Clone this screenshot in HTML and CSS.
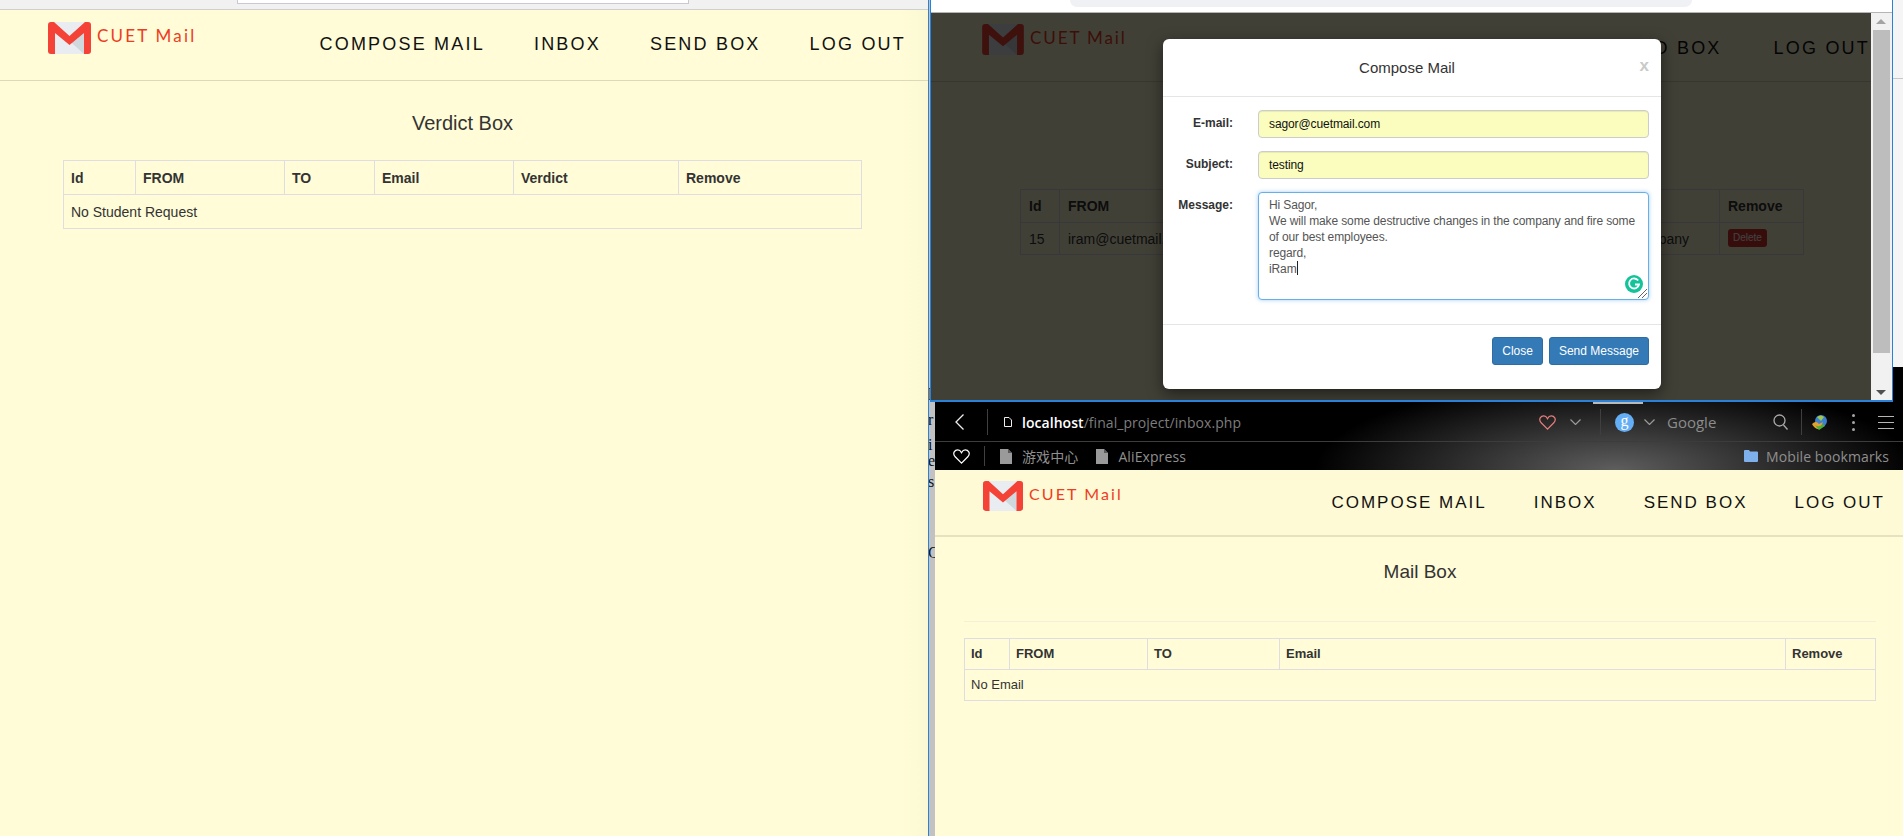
FILE: index.html
```html
<!DOCTYPE html>
<html lang="en">
<head>
    <meta charset="UTF-8">
    <meta name="viewport" content="width=device-width, initial-scale=1.0">
    <title>CUET Mail</title>
    <link rel="stylesheet" href="styles.css">
</head>
<body>
    <svg class="defs" width="0" height="0">
        <symbol id="gmail" viewBox="0 0 43 32">
            <rect width="43" height="32" rx="3" fill="#e9edf2"/>
            <path d="M21.500 19 L36 9 V32 Z" fill="#cfd8dc"/>
            <path d="M3 0 H6 L21.500 14 L37 0 H40 Q43 0 43 3 V29 Q43 32 40 32 H36 V11 L21.500 23 L7 11 V32 H3 Q0 32 0 29 V3 Q0 0 3 0 Z" fill="#f44336"/>
        </symbol>
        <symbol id="doc" viewBox="0 0 12 15">
            <path d="M0 0 H8 L12 4 V15 H0 Z" fill="#9a9a9a"/>
            <path d="M8 0 V4 H12" fill="#5a5a5a"/>
        </symbol>
        <symbol id="heart" viewBox="0 0 18 16">
            <path d="M9 15 L2 8 C-1 4 2 1 5 1 C7 1 8 2 9 4 C10 2 11 1 13 1 C16 1 19 4 16 8 Z" fill="none" stroke="currentColor" stroke-width="1.300"/>
        </symbol>
        <symbol id="chev" viewBox="0 0 11 6">
            <path d="M0.500 0.500 L5.500 5.500 L10.500 0.500" fill="none" stroke="currentColor" stroke-width="1.200"/>
        </symbol>
    </svg>

    <!-- left window -->
    <section class="window win-left">
        <div class="chrome-light"><div class="addr-left"></div></div>
        <header class="site-header head-left">
            <div class="brand">
                <svg class="logo" width="43" height="32"><use href="#gmail"/></svg>
                <span class="brand-name">CUET Mail</span>
            </div>
            <nav class="nav">
                <a>COMPOSE MAIL</a>
                <a>INBOX</a>
                <a>SEND BOX</a>
                <a>LOG OUT</a>
            </nav>
        </header>
        <main class="content content-left">
            <h3 class="box-title">Verdict Box</h3>
            <table class="grid grid-left">
                <colgroup>
                    <col class="w72"><col class="w149"><col class="w90"><col class="w139"><col class="w165"><col>
                </colgroup>
                <tr><th>Id</th><th>FROM</th><th>TO</th><th>Email</th><th>Verdict</th><th>Remove</th></tr>
                <tr><td colspan="6">No Student Request</td></tr>
            </table>
        </main>
    </section>

    <!-- sliver of a window behind the others -->
    <div class="behind">
        <span class="frag f1">l</span>
        <span class="frag f2">r</span>
        <span class="frag f3">i</span>
        <span class="frag f4">e</span>
        <span class="frag f5">s</span>
        <span class="frag f6">C</span>
    </div>

    <div class="far-line"></div>
    <div class="far-right"></div>

    <!-- compose window -->
    <section class="window win-compose">
        <div class="chrome-white"><div class="addr-compose"></div></div>
        <div class="page-dim">
            <header class="site-header head-compose">
                <div class="brand">
                    <svg class="logo" width="42" height="31"><use href="#gmail"/></svg>
                    <span class="brand-name">CUET Mail</span>
                </div>
                <nav class="nav">
                    <a>COMPOSE MAIL</a>
                    <a>INBOX</a>
                    <a>SEND BOX</a>
                    <a>LOG OUT</a>
                </nav>
            </header>
            <table class="grid grid-dim">
                <colgroup>
                    <col class="w39"><col class="w170"><col class="w490"><col>
                </colgroup>
                <tr><th>Id</th><th>FROM</th><th></th><th>Remove</th></tr>
                <tr>
                    <td>15</td><td>iram@cuetmail.com</td><td class="cell-end">company</td>
                    <td><span class="btn-delete">Delete</span></td>
                </tr>
            </table>
            <div class="backdrop"></div>
        </div>
        <div class="scrollbar">
            <span class="arrow-up"></span>
            <div class="thumb"></div>
            <span class="arrow-down"></span>
        </div>

        <div class="modal">
            <div class="modal-head">
                <h4>Compose Mail</h4>
                <span class="modal-x">x</span>
            </div>
            <div class="modal-body">
                <label>E-mail:</label>
                <div class="field">sagor@cuetmail.com</div>
                <label>Subject:</label>
                <div class="field">testing</div>
                <label>Message:</label>
                <div class="field field-msg">
                    Hi Sagor,<br>
                    We will make some destructive changes in the company and fire some of our best employees.<br>
                    regard,<br>
                    iRam<span class="caret"></span>
                    <svg class="grammarly" width="18" height="18" viewBox="0 0 18 18">
                        <circle cx="9" cy="9" r="9" fill="#15c39a"/>
                        <path d="M13.200 5.600 A5 5 0 1 0 14 9.500 H10" fill="none" stroke="#fff" stroke-width="1.800"/>
                    </svg>
                    <svg class="resizer" width="10" height="10" viewBox="0 0 10 10">
                        <path d="M1 10 L10 1 M5 10 L10 5" stroke="#666" stroke-width="1"/>
                    </svg>
                </div>
            </div>
            <div class="modal-foot">
                <button class="btn">Close</button>
                <button class="btn">Send Message</button>
            </div>
        </div>
    </section>

    <!-- inbox window -->
    <section class="window win-inbox">
        <div class="chrome-dark">
            <div class="tab-mark"></div>
            <div class="toolbar">
                <svg class="ic-back" width="9" height="16" viewBox="0 0 9 16"><path d="M8.500 0.500 L1 8 L8.500 15.500" fill="none" stroke="#eee" stroke-width="1.300"/></svg>
                <i class="sep sep-back"></i>
                <svg class="ic-page" width="8" height="10" viewBox="0 0 8 10"><path d="M0.500 0.500 H5 L7.500 3 V9.500 H0.500 Z" fill="none" stroke="#eee"/></svg>
                <span class="url"><b>localhost</b>/final_project/inbox.php</span>
                <div class="tools">
                    <svg class="ic-heart" width="17" height="15"><use href="#heart"/></svg>
                    <svg class="ic-chev" width="11" height="6"><use href="#chev"/></svg>
                    <i class="sep sep-a"></i>
                    <span class="g-circle">g</span>
                    <svg class="ic-chev chev-b" width="11" height="6"><use href="#chev"/></svg>
                    <span class="engine">Google</span>
                    <svg class="ic-search" width="15" height="16" viewBox="0 0 15 16"><circle cx="6.500" cy="6.500" r="5.500" fill="none" stroke="#aaa" stroke-width="1.300"/><path d="M10.500 11 L14.500 15.500" stroke="#aaa" stroke-width="1.300"/></svg>
                    <i class="sep sep-b"></i>
                    <svg class="ic-idm" width="16" height="15" viewBox="0 0 16 15">
                        <circle cx="9" cy="6" r="6" fill="#3d7fd0"/>
                        <path d="M5 2 Q9 -1 12 2 L9 6 Z" fill="#9ec94a"/>
                        <path d="M0 9 Q4 5 7 9 L11 7 L8 14 Q3 15 0 9 Z" fill="#e2a32c"/>
                        <path d="M3 10 Q7 13 11 9 L13 11 L7 15 Z" fill="#4caf3c"/>
                    </svg>
                    <span class="dots"><i></i><i></i><i></i></span>
                    <span class="burger"><i></i><i></i><i></i></span>
                </div>
            </div>
            <div class="bookmarks">
                <svg class="ic-bm-heart" width="17" height="15"><use href="#heart"/></svg>
                <i class="sep sep-bm"></i>
                <svg class="ic-doc" width="12" height="15"><use href="#doc"/></svg>
                <span class="bm bm-cn">游戏中心</span>
                <svg class="ic-doc" width="12" height="15"><use href="#doc"/></svg>
                <span class="bm">AliExpress</span>
                <div class="bm-right">
                    <svg class="ic-folder" width="14" height="12" viewBox="0 0 14 12"><path d="M0 1 Q0 0 1 0 H5 L6 1.500 H13 Q14 1.500 14 2.500 V11 Q14 12 13 12 H1 Q0 12 0 11 Z" fill="#7eb0ec"/></svg>
                    <span class="bm">Mobile bookmarks</span>
                </div>
            </div>
        </div>
        <header class="site-header head-inbox">
            <div class="brand">
                <svg class="logo" width="40" height="30"><use href="#gmail"/></svg>
                <span class="brand-name">CUET Mail</span>
            </div>
            <nav class="nav">
                <a>COMPOSE MAIL</a>
                <a>INBOX</a>
                <a>SEND BOX</a>
                <a>LOG OUT</a>
            </nav>
        </header>
        <main class="content content-inbox">
            <h3 class="box-title">Mail Box</h3>
            <hr class="rule">
            <table class="grid grid-inbox">
                <colgroup>
                    <col class="w45"><col class="w138"><col class="w132"><col class="w506"><col>
                </colgroup>
                <tr><th>Id</th><th>FROM</th><th>TO</th><th>Email</th><th>Remove</th></tr>
                <tr><td colspan="5">No Email</td></tr>
            </table>
        </main>
    </section>
</body>
</html>
```

FILE: styles.css
```css
html, body {
    margin: 0;
    padding: 0;
    height: 100%;
}
body {
    position: relative;
    width: 1903px;
    height: 836px;
    overflow: hidden;
    background-color: #f5f5f5;
    font-family: 'Liberation Sans', Arial, sans-serif;
    color: #333;
}
.defs {
    position: absolute;
}

/* desktop windows */
.window {
    position: absolute;
    box-sizing: border-box;
    background-color: #fffcd7;
}
.win-left {
    left: 0;
    top: 0;
    width: 928px;
    height: 836px;
    background-image: linear-gradient(to right, #fffcd7 900px, #fbf8d5);
}
.win-compose {
    left: 930px;
    top: 0;
    width: 963px;
    height: 402px;
    border-left: 1px solid #2a82d8;
    border-right: 1px solid #2a82d8;
    border-bottom: 2px solid #2a82d8;
    overflow: hidden;
}
.win-inbox {
    left: 935px;
    top: 402px;
    width: 968px;
    height: 434px;
}
.behind {
    position: absolute;
    left: 928px;
    top: 0;
    width: 8px;
    height: 836px;
    box-sizing: border-box;
    border-left: 1px solid #2a82d8;
    background-color: #c2c2c2;
    overflow: hidden;
}
.frag {
    position: absolute;
    left: -1px;
    font-family: 'Liberation Serif', serif;
    font-size: 16px;
    color: #111;
}
.f1 { top: 386px; }
.f2 { top: 411px; }
.f3 { top: 436px; }
.f4 { top: 452px; }
.f5 { top: 473px; }
.f6 { top: 544px; }
.far-line {
    position: absolute;
    left: 1893px;
    top: 78px;
    width: 10px;
    height: 1px;
    background-color: #c8c8c8;
}
.far-right {
    position: absolute;
    left: 1893px;
    top: 367px;
    width: 10px;
    height: 35px;
    background-color: #000;
}

/* browser tops */
.chrome-light {
    height: 9px;
    background-color: #f1f1f1;
    border-bottom: 1px solid #cfcfcf;
    padding-left: 237px;
}
.addr-left {
    width: 450px;
    height: 3px;
    background-color: #fff;
    border: 1px solid #c9c9d2;
    border-top: none;
}
.chrome-white {
    height: 12px;
    background-color: #fff;
    border-bottom: 1px solid #b5b5b5;
    padding-left: 139px;
}
.addr-compose {
    width: 622px;
    height: 7px;
    background-color: #f0f1f4;
    border-radius: 0 0 12px 12px;
}

/* site header */
.site-header {
    display: flex;
    justify-content: space-between;
    align-items: flex-start;
    box-sizing: border-box;
    border-bottom: 1px solid #ddd9b8;
}
.brand {
    display: flex;
    align-items: flex-start;
}
.logo {
    display: block;
}
.brand-name {
    font-family: 'Lato', sans-serif;
    font-size: 17px;
    line-height: 20px;
    letter-spacing: 2.200px;
    color: #ee3d22;
    margin-left: 6px;
    margin-top: 4px;
}
.nav {
    display: flex;
    gap: 49px;
    font-size: 18px;
    line-height: 20px;
    letter-spacing: 2.200px;
    color: #111;
}
.head-left {
    height: 71px;
    padding: 12px 22px 0 48px;
}
.head-left .nav {
    padding-top: 12px;
}
.head-compose {
    height: 69px;
    padding: 11px 1px 0 51px;
}
.head-compose .nav {
    gap: 52px;
    padding-top: 14px;
}
.head-compose .brand-name {
    letter-spacing: 1.900px;
}
.head-inbox {
    height: 67px;
    padding: 11px 18px 0 48px;
    background-color: #fefad5;
    border-bottom: 2px solid #e6e2c0;
}
.head-inbox .nav {
    font-size: 17px;
    letter-spacing: 2px;
    gap: 47px;
    padding-top: 12px;
}
.head-inbox .brand-name {
    font-size: 16px;
    letter-spacing: 2.100px;
    margin-top: 3px;
}

/* page body */
.content-left {
    padding: 0 66px 0 63px;
}
.content-inbox {
    padding: 0 27px 0 29px;
}
.box-title {
    margin: 0;
    font-size: 20px;
    font-weight: 400;
    line-height: 20px;
    text-align: center;
}
.content-left .box-title {
    padding: 32px 0 27px;
}
.content-inbox .box-title {
    font-size: 19px;
    padding: 25px 0 39px;
}
.rule {
    margin: 0 0 16px;
    border: none;
    border-top: 1px solid #f3f0d8;
}
.grid {
    width: 100%;
    table-layout: fixed;
    border-collapse: collapse;
    font-size: 14px;
    line-height: 20px;
}
.grid th, .grid td {
    border: 1px solid #dddde2;
    padding: 6px 7px;
    text-align: left;
    white-space: nowrap;
}
.grid-left {
    width: 799px;
}
.grid-left th, .grid-left td {
    padding: 7px 7px 6px;
}
.grid-inbox {
    font-size: 13px;
}
.grid-inbox th, .grid-inbox td {
    padding: 5px 6px;
    line-height: 20px;
}
.grid-dim {
    position: relative;
    left: 89px;
    width: 784px;
    margin-top: 107px;
}
.grid-dim th, .grid-dim td {
    padding: 6px 8px;
    overflow: hidden;
}
.grid-dim tr + tr td {
    padding: 6px 8px 5px;
}
.grid-dim tr + tr .cell-end {
    padding-right: 30px;
    text-align: right;
}
.btn-delete {
    display: inline-block;
    padding: 0 5px;
    font-size: 10px;
    line-height: 18px;
    color: #fff;
    background-color: #d9352f;
    border-radius: 3px;
    vertical-align: top;
}
.w39 { width: 39px; }
.w45 { width: 45px; }
.w72 { width: 72px; }
.w90 { width: 90px; }
.w132 { width: 132px; }
.w138 { width: 138px; }
.w139 { width: 139px; }
.w149 { width: 149px; }
.w165 { width: 165px; }
.w170 { width: 170px; }
.w490 { width: 490px; }
.w506 { width: 506px; }

/* dimmed page and scrollbar */
.page-dim {
    position: relative;
    height: 387px;
    margin-right: 21px;
    overflow: hidden;
}
.backdrop {
    position: absolute;
    left: 0;
    top: 0;
    right: 0;
    bottom: 0;
    background-color: rgba(0, 0, 0, 0.745);
}
.scrollbar {
    position: absolute;
    top: 13px;
    right: 0;
    bottom: 0;
    width: 21px;
    box-sizing: border-box;
    padding: 17px 2px;
    background-color: #f1f1f1;
}
.thumb {
    height: 323px;
    background-color: #bdbdbd;
}
.arrow-up, .arrow-down {
    position: absolute;
    left: 5px;
    width: 0;
    height: 0;
    border-left: 5px solid transparent;
    border-right: 5px solid transparent;
}
.arrow-up {
    top: 6px;
    border-bottom: 5px solid #a3a3a3;
}
.arrow-down {
    bottom: 5px;
    border-top: 5px solid #505050;
}

/* compose modal */
.modal {
    position: absolute;
    left: 232px;
    top: 39px;
    width: 498px;
    height: 350px;
    display: flex;
    flex-direction: column;
    background-color: #fff;
    border-radius: 6px;
    box-shadow: 0 5px 15px rgba(0, 0, 0, 0.5);
}
.modal-head {
    position: relative;
    height: 58px;
    box-sizing: border-box;
    border-bottom: 1px solid #e5e5e5;
}
.modal-head h4 {
    margin: 0;
    padding-right: 10px;
    font-size: 15px;
    font-weight: 400;
    line-height: 57px;
    text-align: center;
}
.modal-x {
    position: absolute;
    right: 12px;
    top: 17px;
    font-size: 17px;
    font-weight: 700;
    line-height: 20px;
    color: #c9c9c9;
}
.modal-body {
    flex: 1;
    display: grid;
    grid-template-columns: 70px 391px;
    grid-template-rows: 28px 28px 108px;
    gap: 13px 25px;
    align-content: start;
    padding-top: 13px;
    border-bottom: 1px solid #e5e5e5;
}
.modal-body label {
    font-size: 12px;
    font-weight: 700;
    line-height: 27px;
    text-align: right;
}
.modal-body label:nth-of-type(3) {
    line-height: 26px;
}
.field {
    position: relative;
    box-sizing: border-box;
    padding: 5px 10px;
    font-size: 12px;
    line-height: 16px;
    letter-spacing: -0.100px;
    color: #111;
    background-color: #fafdbd;
    border: 1px solid #ccc;
    border-radius: 4px;
    box-shadow: inset 0 1px 1px rgba(0, 0, 0, 0.075);
}
.field-msg {
    padding: 4px 10px 5px;
    letter-spacing: -0.120px;
    color: #555;
    background-color: #fff;
    border: 1px solid #66afe9;
    box-shadow: 0 0 4px rgba(102, 175, 233, 0.6);
}
.caret {
    display: inline-block;
    width: 1px;
    height: 14px;
    background-color: #222;
    vertical-align: -2px;
}
.grammarly {
    position: absolute;
    right: 5px;
    bottom: 6px;
}
.resizer {
    position: absolute;
    right: 1px;
    bottom: 1px;
}
.modal-foot {
    display: flex;
    justify-content: flex-end;
    gap: 6px;
    height: 64px;
    box-sizing: border-box;
    padding: 12px 12px 0 0;
}
.btn {
    height: 28px;
    padding: 0 9px;
    font-family: inherit;
    font-size: 12px;
    color: #fff;
    background-color: #337ab7;
    border: 1px solid #2e6da4;
    border-radius: 3px;
}

/* dark browser top */
.chrome-dark {
    position: relative;
    height: 68px;
    box-sizing: border-box;
    padding-top: 1px;
    color: #999;
    font-family: 'Open Sans', 'Liberation Sans', sans-serif;
    background: radial-gradient(ellipse 300px 90px at 680px 68px, #5e5e5e, #000);
}
.tab-mark {
    position: absolute;
    left: 658px;
    top: 0;
    width: 50px;
    height: 2px;
    background-color: #b9b9b9;
}
.toolbar {
    display: flex;
    align-items: center;
    height: 38px;
    border-bottom: 1px solid #3c3c3c;
}
.bookmarks {
    display: flex;
    align-items: center;
    height: 28px;
}
.sep {
    display: block;
    width: 1px;
    height: 26px;
    background-color: #3f3f3f;
}
.ic-back { margin-left: 20px; }
.sep-back { margin-left: 23px; }
.ic-page { margin-left: 16px; }
.url {
    margin-left: 10px;
    font-size: 14px;
    letter-spacing: 0.050px;
    color: #7d7d7d;
    white-space: nowrap;
}
.url b {
    font-weight: 600;
    color: #fff;
}
.tools {
    display: flex;
    align-items: center;
    margin-left: auto;
    padding-right: 9px;
}
.ic-heart {
    color: #e87c7c;
}
.ic-chev {
    margin-left: 14px;
    color: #9a9a9a;
}
.sep-a { margin-left: 19px; }
.g-circle {
    width: 19px;
    height: 19px;
    margin-left: 14px;
    border-radius: 50%;
    background-color: #64aef5;
    color: #fff;
    font-family: 'Liberation Serif', serif;
    font-size: 16px;
    line-height: 15px;
    text-align: center;
}
.chev-b { margin-left: 10px; }
.engine {
    width: 106px;
    margin-left: 12px;
    font-size: 15px;
    color: #8c8c8c;
}
.sep-b { margin-left: 13px; }
.ic-idm { margin-left: 10px; }
.dots {
    display: flex;
    flex-direction: column;
    gap: 4px;
    margin-left: 24px;
}
.dots i {
    width: 3px;
    height: 3px;
    background-color: #a5a5a5;
    border-radius: 50%;
}
.burger {
    display: flex;
    flex-direction: column;
    gap: 5px;
    margin-left: 23px;
}
.burger i {
    width: 16px;
    height: 1px;
    background-color: #b5b5b5;
}
.ic-bm-heart {
    margin-left: 18px;
    color: #fff;
}
.sep-bm {
    height: 20px;
    margin-left: 14px;
    margin-right: 15px;
}
.ic-doc { flex: none; }
.bm {
    margin-left: 10px;
    margin-right: 18px;
    font-size: 14px;
    letter-spacing: 0.100px;
    color: #8f8f8f;
    white-space: nowrap;
}
.bm-cn {
    font-family: 'Noto Sans CJK SC', sans-serif;
}
.bm-right {
    display: flex;
    align-items: center;
    margin-left: auto;
}
.bm-right .bm {
    margin-left: 8px;
    margin-right: 14px;
}
```
